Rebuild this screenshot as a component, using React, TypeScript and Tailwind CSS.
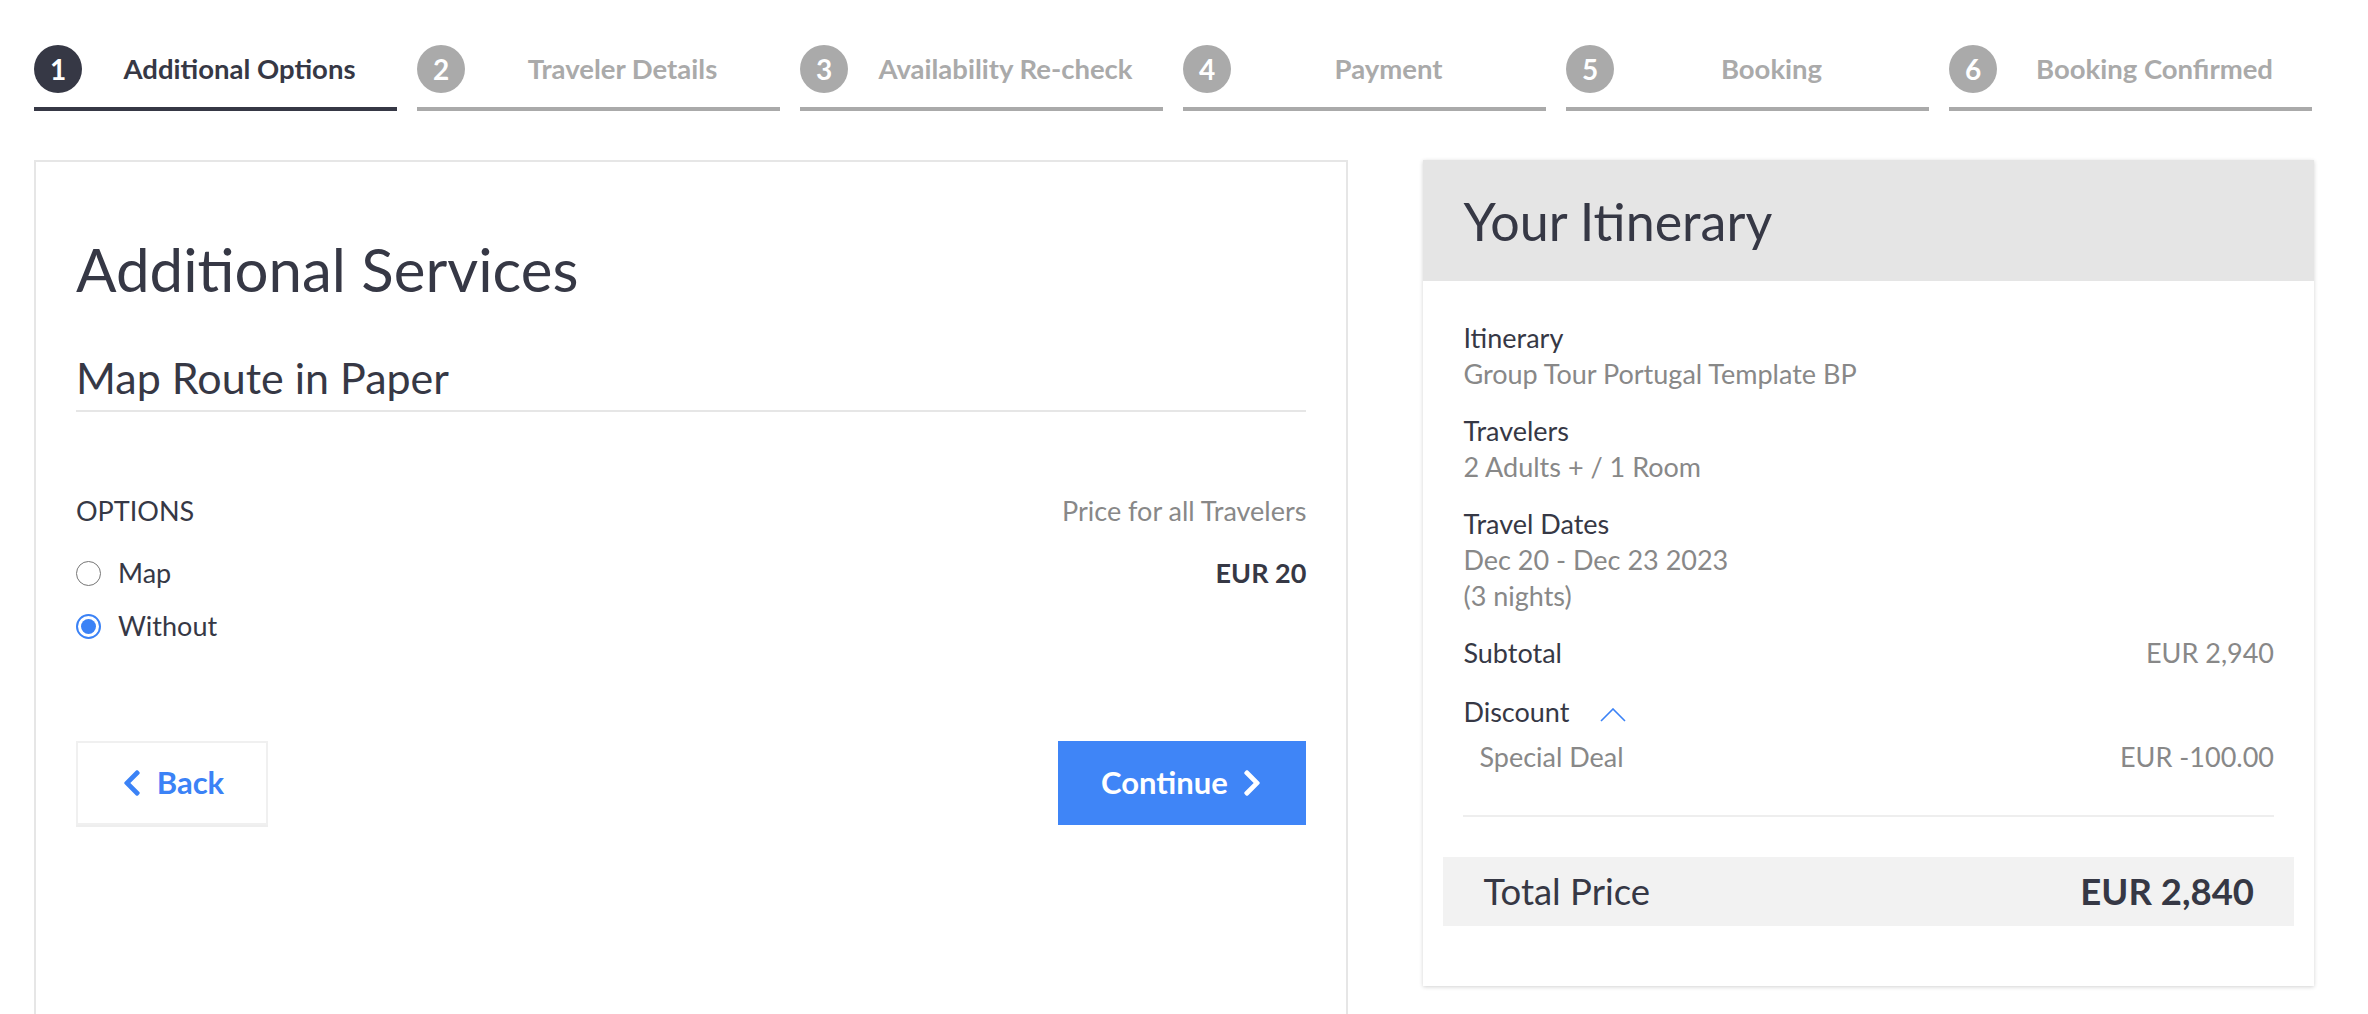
import React from "react";
import { FaChevronLeft, FaChevronRight } from "react-icons/fa";

const steps = [
  "Additional Options",
  "Traveler Details",
  "Availability Re-check",
  "Payment",
  "Booking",
  "Booking Confirmed",
];

const Stepper: React.FC<{ active: number }> = ({ active }) => (
  <div className="flex gap-[20px] pt-[45px]">
    {steps.map((label, i) => {
      const on = i === active;
      return (
        <div key={label} className="w-[363px] flex flex-col">
          <div className="flex items-center h-[48px]">
            <div
              className={`w-[48px] h-[48px] rounded-full flex items-center justify-center text-white font-bold text-[28px] ${
                on ? "bg-[#363845]" : "bg-[#aaaaaa]"
              }`}
            >
              {i + 1}
            </div>
            <div
              className={`flex-1 text-center font-bold text-[27.5px] ${
                on ? "text-[#363845]" : "text-[#aaaaaa]"
              }`}
            >
              {label}
            </div>
          </div>
          <div className={`mt-[14px] h-[4px] ${on ? "bg-[#363845]" : "bg-[#aaaaaa]"}`} />
        </div>
      );
    })}
  </div>
);

const Radio: React.FC<{ checked?: boolean; label: string }> = ({ checked, label }) => (
  <label className="flex items-center gap-[17px] h-[36px]">
    {checked ? (
      <span className="w-[25px] h-[25px] rounded-full border-2 border-[#3b82f6] flex items-center justify-center">
        <span className="w-[15px] h-[15px] rounded-full bg-[#3b82f6]" />
      </span>
    ) : (
      <span className="w-[25px] h-[25px] rounded-full border-[1.5px] border-[#767676]" />
    )}
    <span className="text-[27px] text-[#363845]">{label}</span>
  </label>
);

const InfoBlock: React.FC<{ title: string; lines: string[] }> = ({ title, lines }) => (
  <div className="mb-[21px]">
    <div className="text-[27px] leading-[36px] text-[#363845]">{title}</div>
    {lines.map((l) => (
      <div key={l} className="text-[27px] leading-[36px] text-[#888888]">
        {l}
      </div>
    ))}
  </div>
);

export default function App() {
  return (
    <div className="min-h-screen bg-white pl-[34px] w-[2314px]" style={{ fontFamily: "Lato, 'Noto Sans', sans-serif" }}>
      <Stepper active={0} />

      <div className="flex gap-[75px] mt-[49px] items-start">
        {/* left: additional services */}
        <div className="w-[1315px] h-[900px] border-2 border-[#e6e6e6] px-[40px] pt-[72px]">
          <h1 className="text-[60px] leading-[70px] text-[#363845]">Additional Services</h1>
          <div className="mt-[50px] pb-[8px] border-b-2 border-[#e6e6e6]">
            <h2 className="text-[43px] leading-[48px] text-[#363845]">Map Route in Paper</h2>
          </div>

          <div className="mt-[81px] flex justify-between text-[27px] leading-[36px]">
            <span className="text-[#363845]">OPTIONS</span>
            <span className="text-[#888888]">Price for all Travelers</span>
          </div>
          <div className="mt-[24px] flex justify-between items-center">
            <Radio label="Map" />
            <span className="text-[27px] font-bold text-[#363845]">EUR 20</span>
          </div>
          <div className="mt-[15px]">
            <Radio checked label="Without" />
          </div>

          <div className="mt-[96px] flex justify-between">
            <button className="w-[192px] h-[84px] border-2 border-[#f0f0f0] shadow-[0_2px_0_#eeeeee] flex items-center justify-center gap-[13px] text-[#3b82f6] font-bold text-[31px]">
              <FaChevronLeft className="w-[24px] h-[30px]" />
              Back
            </button>
            <button className="w-[248px] h-[84px] bg-[#3f85f7] flex items-center justify-center gap-[12px] text-white font-bold text-[31px]">
              Continue
              <FaChevronRight className="w-[24px] h-[30px]" />
            </button>
          </div>
        </div>

        {/* right: itinerary */}
        <div className="w-[891px] bg-white shadow-[0_1px_4px_rgba(0,0,0,0.18)] pb-[60px]">
          <div className="h-[121px] bg-[#e5e5e5] px-[40px] flex items-center">
            <h2 className="text-[52px] text-[#363845]">Your Itinerary</h2>
          </div>
          <div className="px-[40px] pt-[39px]">
            <InfoBlock title="Itinerary" lines={["Group Tour Portugal Template BP"]} />
            <InfoBlock title="Travelers" lines={["2 Adults + / 1 Room"]} />
            <InfoBlock title="Travel Dates" lines={["Dec 20 - Dec 23 2023", "(3 nights)"]} />
            <div className="flex justify-between text-[27px] leading-[36px]">
              <span className="text-[#363845]">Subtotal</span>
              <span className="text-[#888888]">EUR 2,940</span>
            </div>
            <div className="mt-[23px] flex items-center gap-[31px] text-[27px] leading-[36px] text-[#363845]">
              Discount
              <svg width="26" height="14" viewBox="0 0 26 14" fill="none" className="mt-[6px]">
                <polyline points="1,13 13,1 25,13" stroke="#3b82f6" strokeWidth="1.6" />
              </svg>
            </div>
            <div className="mt-[9px] pl-[16px] flex justify-between text-[27px] leading-[36px] text-[#888888]">
              <span>Special Deal</span>
              <span>EUR -100.00</span>
            </div>
            <div className="mt-[40px] h-[2px] bg-[#eeeeee]" />
          </div>
          <div className="mx-[20px] mt-[40px] h-[69px] bg-[#f2f2f2] px-[40px] flex items-center justify-between text-[36.5px] text-[#363845]">
            <span>Total Price</span>
            <span className="font-bold">EUR 2,840</span>
          </div>
        </div>
      </div>
    </div>
  );
}
